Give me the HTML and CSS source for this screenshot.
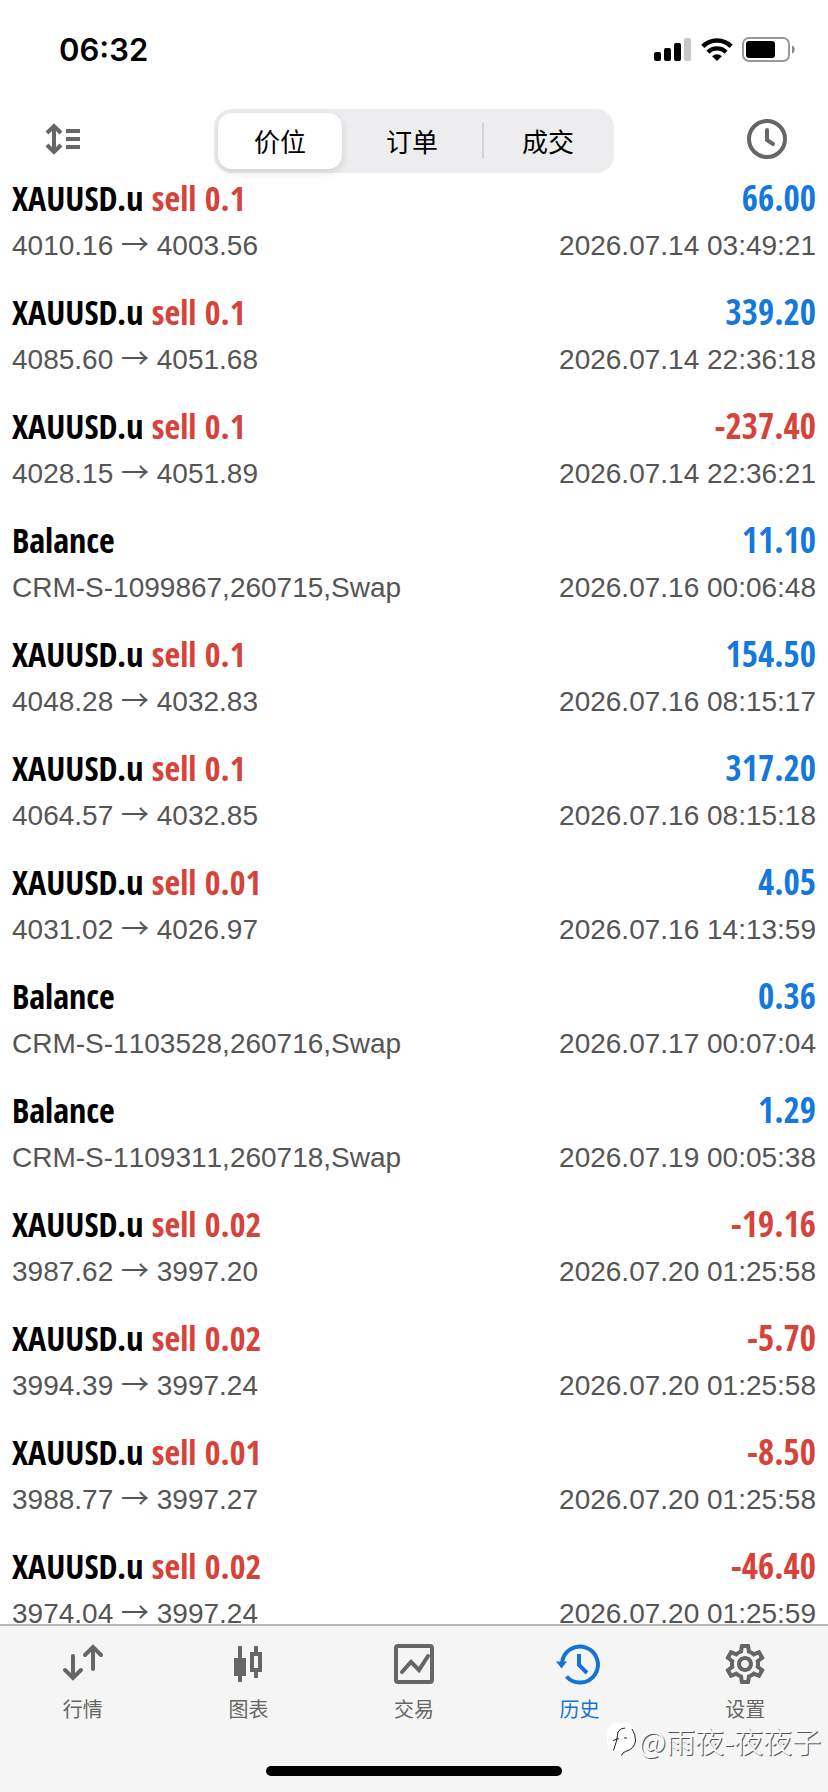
FILE: index.html
```html
<!DOCTYPE html>
<html lang="zh-CN">
<head>
<meta charset="utf-8">
<meta name="viewport" content="width=device-width, initial-scale=1">
<title>历史</title>
<link rel="stylesheet" href="styles.css">
</head>
<body>
<div class="app">
  <header class="top">
    <div class="status">
      <time class="clock">06:32</time>
      <div class="status-icons">
        <svg width="38" height="24" viewBox="0 0 38 24" aria-hidden="true"><rect x="0" y="14" width="7" height="9" rx="2"/><rect x="10" y="10" width="7" height="13" rx="2"/><rect x="20" y="5" width="7" height="18" rx="2"/><rect x="30" y="0" width="7" height="23" rx="2" fill="#c8c8c8"/></svg>
        <svg width="32" height="24" viewBox="0 0 32 24" aria-hidden="true"><g fill="none" stroke="#000" stroke-width="4.4"><path d="M1.8 8.4a20 20 0 0 1 28.4 0"/><path d="M7 14.2a12.6 12.6 0 0 1 18 0"/></g><path d="M16 23l-4.9-4.7a7 7 0 0 1 9.8 0z"/></svg>
        <svg width="54" height="26" viewBox="0 0 54 26" aria-hidden="true"><rect x="1" y="1" width="46" height="23" rx="6" fill="none" stroke="#999" stroke-width="2"/><rect x="4" y="4" width="29" height="17" rx="3"/><path d="M50 8.500c3.500 1 3.500 7 0 8z" fill="#888"/></svg>
      </div>
    </div>
    <nav class="toolbar">
      <button class="icon-button" aria-label="排序"><svg width="36" height="32" viewBox="0 0 36 32" fill="none" stroke="#666" stroke-width="4" aria-hidden="true"><path d="M9 3v26M2 10l7-7 7 7M2 22l7 7 7-7M21 8h14M21 16h14M21 24h14"/></svg></button>
      <div class="segments">
        <button class="segment is-active">价位</button>
        <button class="segment">订单</button>
        <button class="segment divided">成交</button>
      </div>
      <button class="icon-button" aria-label="时间"><svg width="40" height="40" viewBox="0 0 40 40" fill="none" stroke="#666" stroke-width="4" stroke-linecap="round" aria-hidden="true"><circle cx="20" cy="20" r="18"/><path d="M20 11v10l6 4"/></svg></button>
    </nav>
  </header>

  <main class="history">
    <article class="deal"><h2 class="name">XAUUSD.u <span class="side">sell 0.1</span></h2><data class="amount">66.00</data><p class="detail">4010.16 <span class="arrow">→</span> 4003.56</p><time class="detail">2026.07.14 03:49:21</time></article>
    <article class="deal"><h2 class="name">XAUUSD.u <span class="side">sell 0.1</span></h2><data class="amount">339.20</data><p class="detail">4085.60 <span class="arrow">→</span> 4051.68</p><time class="detail">2026.07.14 22:36:18</time></article>
    <article class="deal"><h2 class="name">XAUUSD.u <span class="side">sell 0.1</span></h2><data class="amount loss">-237.40</data><p class="detail">4028.15 <span class="arrow">→</span> 4051.89</p><time class="detail">2026.07.14 22:36:21</time></article>
    <article class="deal"><h2 class="name">Balance</h2><data class="amount">11.10</data><p class="detail">CRM-S-1099867,260715,Swap</p><time class="detail">2026.07.16 00:06:48</time></article>
    <article class="deal"><h2 class="name">XAUUSD.u <span class="side">sell 0.1</span></h2><data class="amount">154.50</data><p class="detail">4048.28 <span class="arrow">→</span> 4032.83</p><time class="detail">2026.07.16 08:15:17</time></article>
    <article class="deal"><h2 class="name">XAUUSD.u <span class="side">sell 0.1</span></h2><data class="amount">317.20</data><p class="detail">4064.57 <span class="arrow">→</span> 4032.85</p><time class="detail">2026.07.16 08:15:18</time></article>
    <article class="deal"><h2 class="name">XAUUSD.u <span class="side">sell 0.01</span></h2><data class="amount">4.05</data><p class="detail">4031.02 <span class="arrow">→</span> 4026.97</p><time class="detail">2026.07.16 14:13:59</time></article>
    <article class="deal"><h2 class="name">Balance</h2><data class="amount">0.36</data><p class="detail">CRM-S-1103528,260716,Swap</p><time class="detail">2026.07.17 00:07:04</time></article>
    <article class="deal"><h2 class="name">Balance</h2><data class="amount">1.29</data><p class="detail">CRM-S-1109311,260718,Swap</p><time class="detail">2026.07.19 00:05:38</time></article>
    <article class="deal"><h2 class="name">XAUUSD.u <span class="side">sell 0.02</span></h2><data class="amount loss">-19.16</data><p class="detail">3987.62 <span class="arrow">→</span> 3997.20</p><time class="detail">2026.07.20 01:25:58</time></article>
    <article class="deal"><h2 class="name">XAUUSD.u <span class="side">sell 0.02</span></h2><data class="amount loss">-5.70</data><p class="detail">3994.39 <span class="arrow">→</span> 3997.24</p><time class="detail">2026.07.20 01:25:58</time></article>
    <article class="deal"><h2 class="name">XAUUSD.u <span class="side">sell 0.01</span></h2><data class="amount loss">-8.50</data><p class="detail">3988.77 <span class="arrow">→</span> 3997.27</p><time class="detail">2026.07.20 01:25:58</time></article>
    <article class="deal"><h2 class="name">XAUUSD.u <span class="side">sell 0.02</span></h2><data class="amount loss">-46.40</data><p class="detail">3974.04 <span class="arrow">→</span> 3997.24</p><time class="detail">2026.07.20 01:25:59</time></article>
  </main>

  <footer class="bottom">
    <nav class="tabs">
      <a class="tab" href="#quotes"><svg width="44" height="44" viewBox="0 0 44 44" fill="none" stroke="#666" stroke-width="4" stroke-linecap="round" aria-hidden="true"><path d="M12 14v22M4 28l8 8 8-8M32 27V5M24 13l8-8 8 8"/></svg>行情</a>
      <a class="tab" href="#chart"><svg width="44" height="44" viewBox="0 0 44 44" fill="#666" aria-hidden="true"><path d="M12 4h4v12h4v18h-4v6h-4v-6H8V16h4z"/><path fill-rule="evenodd" d="M28 4h4v6h4v20h-4v6h-4v-6h-4V10h4zM28 14v12h4V14z"/></svg>图表</a>
      <a class="tab" href="#trade"><svg width="44" height="44" viewBox="0 0 44 44" fill="none" stroke="#666" stroke-width="4" aria-hidden="true"><rect x="4" y="4" width="36" height="36" rx="2"/><path d="M10 30l9-10 8 8 9-14" stroke-linecap="round"/></svg>交易</a>
      <a class="tab is-current" href="#history" aria-current="page"><svg width="44" height="44" viewBox="0 0 44 44" fill="none" stroke="#1474d4" stroke-width="4" aria-hidden="true"><path d="M4 21A18 18 0 1 1 8.500 34.500M21 12v11l8 8"/><path d="M-2 19.500h11l-5.500 7z" fill="#1474d4" stroke="none"/></svg>历史</a>
      <a class="tab" href="#settings"><svg width="44" height="44" viewBox="1 1 22 22" fill="#666" aria-hidden="true"><path d="M19.430 12.980c.04-.32.07-.64.07-.98 0-.34-.03-.66-.07-.98l2.110-1.650c.19-.15.24-.42.12-.64l-2-3.460c-.09-.16-.26-.25-.44-.25-.06 0-.12.01-.17.03l-2.490 1c-.52-.4-1.080-.73-1.690-.98l-.38-2.650C14.460 2.180 14.250 2 14 2h-4c-.25 0-.46.18-.49.42l-.38 2.650c-.61.25-1.170.59-1.690.98l-2.490-1c-.06-.02-.12-.03-.18-.03-.17 0-.34.09-.43.25l-2 3.460c-.13.22-.07.49.12.64l2.110 1.650c-.04.32-.07.65-.07.98 0 .33.03.66.07.98l-2.110 1.650c-.19.15-.24.42-.12.64l2 3.460c.09.16.26.25.44.25.06 0 .12-.01.17-.03l2.490-1c.52.4 1.080.73 1.690.98l.38 2.650c.03.24.24.42.49.42h4c.25 0 .46-.18.49-.42l.38-2.650c.61-.25 1.170-.59 1.690-.98l2.490 1c.06.02.12.03.18.03.17 0 .34-.09.43-.25l2-3.460c.12-.22.07-.49-.12-.64l-2.110-1.650zm-1.980-1.710c.04.31.05.52.05.73 0 .21-.02.43-.05.73l-.14 1.130.89.7 1.080.84-.7 1.210-1.270-.51-1.040-.42-.9.68c-.43.32-.84.56-1.250.73l-1.060.43-.16 1.130-.2 1.350h-1.400l-.19-1.350-.16-1.130-1.060-.43c-.43-.18-.83-.41-1.230-.71l-.91-.7-1.060.43-1.270.51-.7-1.210 1.080-.84.89-.7-.14-1.130c-.03-.31-.05-.54-.05-.74s.02-.43.05-.73l.14-1.130-.89-.7-1.080-.84.7-1.210 1.270.51 1.040.42.9-.68c.43-.32.84-.56 1.250-.73l1.060-.43.16-1.130.2-1.350h1.390l.19 1.350.16 1.130 1.060.43c.43.18.83.41 1.230.71l.91.7 1.060-.43 1.270-.51.7 1.210-1.070.85-.89.7.14 1.130zM12 8c-2.210 0-4 1.790-4 4s1.790 4 4 4 4-1.790 4-4-1.790-4-4-4zm0 6c-1.100 0-2-.9-2-2s.9-2 2-2 2 .9 2 2-.9 2-2 2z"/></svg>设置</a>
    </nav>
    <div class="home-bar"></div>
    <div class="watermark"><svg width="30" height="34" viewBox="0 0 30 34" aria-hidden="true"><rect width="28" height="28" rx="10" fill="#fff"/><path d="M6.500 27.500L9.500 18l1.500-9q2-4 7-4M6 17.500l6-2M17 15h3M25 6q4 6 3.500 12-1 8-10 10.500-3 1-4 4" fill="none" stroke="#222"/></svg><span>@雨夜-夜夜子</span></div>
  </footer>
</div>
</body>
</html>
```
FILE: styles.css
```css
* { box-sizing: border-box; }
body {
  margin: 0;
  background: #fff;
  color: #000;
  font-family: "Liberation Sans", "Noto Sans CJK SC", sans-serif;
}
button { padding: 0; border: 0; background: none; color: inherit; font: inherit; }
svg { display: block; flex: none; overflow: visible; }
.app { display: flex; flex-direction: column; height: 100vh; overflow: hidden; }
.top { flex: none; }
.status {
  display: flex;
  align-items: center;
  justify-content: space-between;
  height: 100px;
  padding: 0 32px 0 59px;
}
.clock { font: 600 31px/40px Inter, sans-serif; }
.status-icons { display: flex; align-items: center; gap: 9px; }
.toolbar {
  display: flex;
  align-items: center;
  justify-content: space-between;
  height: 77px;
  padding: 0 41px 0 45px;
}
.segments {
  display: grid;
  grid-template-columns: 124px 1fr 1fr;
  gap: 4px;
  width: 400px;
  height: 64px;
  margin-top: 4px;
  padding: 4px 0 4px 4px;
  border-radius: 18px;
  background: #ededef;
}
.segment { font: 26px/54px "Noto Sans CJK SC", sans-serif; }
.segment.is-active {
  border-radius: 14px;
  background: #fff;
  box-shadow: 0 3px 8px rgba(0, 0, 0, .12);
}
.segment.divided { background: linear-gradient(#d4d4d6, #d4d4d6) 0 center / 2px 36px no-repeat; }
.history {
  flex: 1;
  min-height: 0;
  margin-top: -6px;
  padding: 6px 12px 0;
  overflow: hidden;
}
.deal {
  display: grid;
  grid-template-columns: 1fr auto;
  grid-template-rows: 42px 54px;
  align-items: center;
  height: 114px;
}
.name, .amount { margin: 0; font: bold 34px/42px "Open Sans Condensed", "Liberation Sans Narrow", sans-serif; }
.side, .loss { color: #d6433a; }
.amount { color: #1478dc; font-size: 35px; text-align: right; }
.amount.loss { color: #d6433a; }
.detail { margin: 0; color: #555; font-size: 28px; font-kerning: none; line-height: 24px; }
.arrow { font-family: "Noto Sans CJK SC", sans-serif; line-height: 0; }
.bottom {
  position: relative;
  flex: none;
  height: 168px;
  border-top: 2px solid #b6b8b8;
  background: #f5f5f5;
}
.tabs { display: grid; grid-template-columns: repeat(5, 1fr); padding-top: 16px; }
.tab {
  display: flex;
  flex-direction: column;
  align-items: center;
  gap: 8px;
  color: #666;
  font: 20px/30px "Noto Sans CJK SC", sans-serif;
  text-decoration: none;
}
.tab.is-current { color: #1474d4; }
.home-bar {
  width: 296px;
  height: 10px;
  margin: 42px auto 0;
  border-radius: 5px;
  background: #000;
}
.watermark {
  position: absolute;
  right: 7px;
  bottom: 32px;
  display: flex;
  align-items: center;
  gap: 2px;
  color: #f8f8f8;
  font: 29px/40px "Noto Sans CJK SC", sans-serif;
  text-shadow: 1px 1px 0 #555;
}
```
